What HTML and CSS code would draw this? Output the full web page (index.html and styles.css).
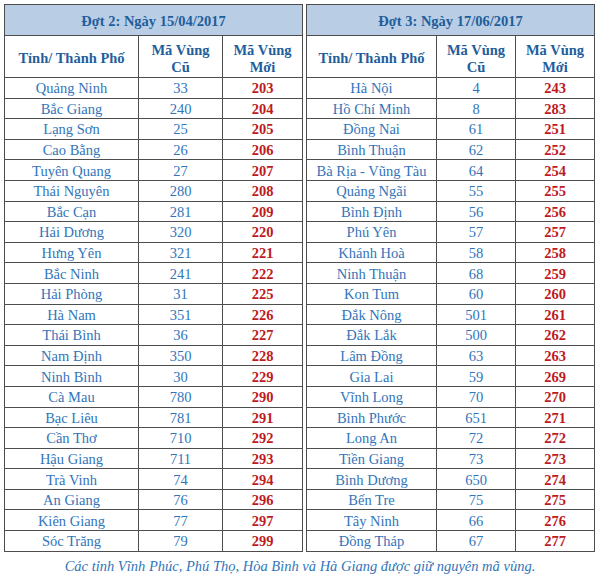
FILE: index.html
```html
<!DOCTYPE html>
<html lang="vi">
<head>
<meta charset="utf-8">
<title>Mã vùng mới</title>
<link rel="stylesheet" href="styles.css">
</head>
<body>
<div class="page">
  <div class="tables">
    <table class="codes codes-left">
      <colgroup><col class="c-name"><col class="c-old"><col class="c-new"></colgroup>
      <thead>
        <tr class="title"><th colspan="3">Đợt 2: Ngày 15/04/2017</th></tr>
        <tr class="head"><th>Tỉnh/ Thành Phố</th><th>Mã Vùng<br>Cũ</th><th>Mã Vùng<br>Mới</th></tr>
      </thead>
      <tbody>
        <tr><td>Quảng Ninh</td><td>33</td><td class="new">203</td></tr>
        <tr><td>Bắc Giang</td><td>240</td><td class="new">204</td></tr>
        <tr><td>Lạng Sơn</td><td>25</td><td class="new">205</td></tr>
        <tr><td>Cao Bằng</td><td>26</td><td class="new">206</td></tr>
        <tr><td>Tuyên Quang</td><td>27</td><td class="new">207</td></tr>
        <tr><td>Thái Nguyên</td><td>280</td><td class="new">208</td></tr>
        <tr><td>Bắc Cạn</td><td>281</td><td class="new">209</td></tr>
        <tr><td>Hải Dương</td><td>320</td><td class="new">220</td></tr>
        <tr><td>Hưng Yên</td><td>321</td><td class="new">221</td></tr>
        <tr><td>Bắc Ninh</td><td>241</td><td class="new">222</td></tr>
        <tr><td>Hải Phòng</td><td>31</td><td class="new">225</td></tr>
        <tr><td>Hà Nam</td><td>351</td><td class="new">226</td></tr>
        <tr><td>Thái Bình</td><td>36</td><td class="new">227</td></tr>
        <tr><td>Nam Định</td><td>350</td><td class="new">228</td></tr>
        <tr><td>Ninh Bình</td><td>30</td><td class="new">229</td></tr>
        <tr><td>Cà Mau</td><td>780</td><td class="new">290</td></tr>
        <tr><td>Bạc Liêu</td><td>781</td><td class="new">291</td></tr>
        <tr><td>Cần Thơ</td><td>710</td><td class="new">292</td></tr>
        <tr><td>Hậu Giang</td><td>711</td><td class="new">293</td></tr>
        <tr><td>Trà Vinh</td><td>74</td><td class="new">294</td></tr>
        <tr><td>An Giang</td><td>76</td><td class="new">296</td></tr>
        <tr><td>Kiên Giang</td><td>77</td><td class="new">297</td></tr>
        <tr><td>Sóc Trăng</td><td>79</td><td class="new">299</td></tr>
      </tbody>
    </table>
    <table class="codes codes-right">
      <colgroup><col class="c-name"><col class="c-old"><col class="c-new"></colgroup>
      <thead>
        <tr class="title"><th colspan="3">Đợt 3: Ngày 17/06/2017</th></tr>
        <tr class="head"><th>Tỉnh/ Thành Phố</th><th>Mã Vùng<br>Cũ</th><th>Mã Vùng<br>Mới</th></tr>
      </thead>
      <tbody>
        <tr><td>Hà Nội</td><td>4</td><td class="new">243</td></tr>
        <tr><td>Hồ Chí Minh</td><td>8</td><td class="new">283</td></tr>
        <tr><td>Đồng Nai</td><td>61</td><td class="new">251</td></tr>
        <tr><td>Bình Thuận</td><td>62</td><td class="new">252</td></tr>
        <tr><td>Bà Rịa - Vũng Tàu</td><td>64</td><td class="new">254</td></tr>
        <tr><td>Quảng Ngãi</td><td>55</td><td class="new">255</td></tr>
        <tr><td>Bình Định</td><td>56</td><td class="new">256</td></tr>
        <tr><td>Phú Yên</td><td>57</td><td class="new">257</td></tr>
        <tr><td>Khánh Hoà</td><td>58</td><td class="new">258</td></tr>
        <tr><td>Ninh Thuận</td><td>68</td><td class="new">259</td></tr>
        <tr><td>Kon Tum</td><td>60</td><td class="new">260</td></tr>
        <tr><td>Đắk Nông</td><td>501</td><td class="new">261</td></tr>
        <tr><td>Đắk Lắk</td><td>500</td><td class="new">262</td></tr>
        <tr><td>Lâm Đồng</td><td>63</td><td class="new">263</td></tr>
        <tr><td>Gia Lai</td><td>59</td><td class="new">269</td></tr>
        <tr><td>Vĩnh Long</td><td>70</td><td class="new">270</td></tr>
        <tr><td>Bình Phước</td><td>651</td><td class="new">271</td></tr>
        <tr><td>Long An</td><td>72</td><td class="new">272</td></tr>
        <tr><td>Tiền Giang</td><td>73</td><td class="new">273</td></tr>
        <tr><td>Bình Dương</td><td>650</td><td class="new">274</td></tr>
        <tr><td>Bến Tre</td><td>75</td><td class="new">275</td></tr>
        <tr><td>Tây Ninh</td><td>66</td><td class="new">276</td></tr>
        <tr><td>Đồng Tháp</td><td>67</td><td class="new">277</td></tr>
      </tbody>
    </table>
  </div>
  <p class="note">Các tỉnh Vĩnh Phúc, Phú Thọ, Hòa Bình và Hà Giang được giữ nguyên mã vùng.</p>
</div>
</body>
</html>
```

FILE: styles.css
```css
html, body {
  margin: 0;
  padding: 0;
  background: #ffffff;
}

.page {
  width: 600px;
  height: 578px;
  padding: 4px 0 0 4px;
  box-sizing: border-box;
  font-family: "Liberation Serif", "Times New Roman", serif;
}

.tables {
  display: flex;
  gap: 3px;
  align-items: flex-start;
}

.codes {
  border-collapse: separate;
  border-spacing: 0;
  table-layout: fixed;
  border-left: 1px solid #4d4d4d;
  border-top: 1px solid #4d4d4d;
}

.codes-left { width: 299px; }
.codes-right { width: 289px; }

.codes-left .c-name { width: 134px; }
.codes-left .c-old { width: 84px; }
.codes-left .c-new { width: 80px; }
.codes-right .c-name { width: 130px; }
.codes-right .c-old { width: 79px; }
.codes-right .c-new { width: 79px; }

.codes th,
.codes td {
  border-right: 1px solid #4d4d4d;
  border-bottom: 1px solid #4d4d4d;
  padding: 0;
  text-align: center;
  vertical-align: middle;
  box-sizing: border-box;
}

.title th {
  height: 31px;
  padding-top: 3px;
  background: #b9cde5;
  color: #1f5e9c;
  font-weight: bold;
  font-size: 14.5px;
}

.head th {
  height: 42px;
  padding-top: 4px;
  color: #1f5e9c;
  font-weight: bold;
  font-size: 14.5px;
  line-height: 17px;
}

.codes td {
  height: 20.6px;
  padding-top: 1px;
  color: #3175ba;
  font-size: 14.5px;
  line-height: 16px;
}

.codes td.new {
  color: #be1a1e;
  font-weight: bold;
}

.note {
  margin: 6px 0 0 0;
  padding-right: 4px;
  text-align: center;
  font-style: italic;
  font-size: 14.5px;
  color: #3175ba;
}
```
